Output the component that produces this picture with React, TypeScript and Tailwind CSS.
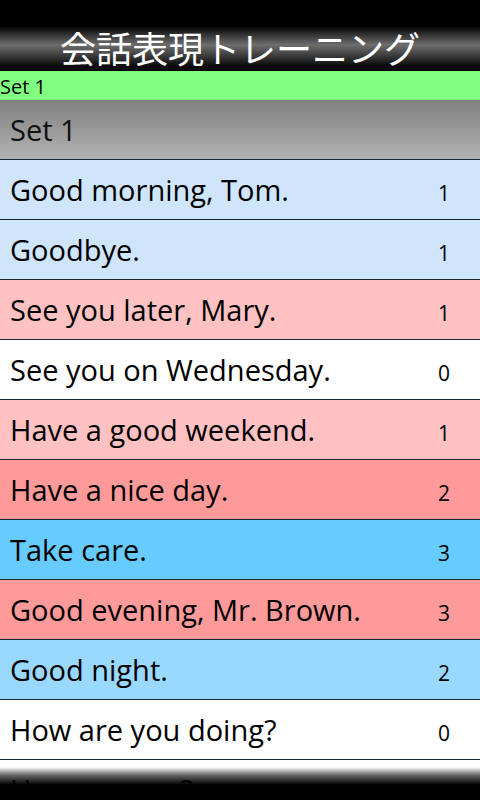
import React from "react";

type Phrase = {
  text: string;
  count: number;
  bg: string;
};

const PHRASES: Phrase[] = [
  { text: "Good morning, Tom.", count: 1, bg: "bg-[#cfe5fc]" },
  { text: "Goodbye.", count: 1, bg: "bg-[#cfe5fc]" },
  { text: "See you later, Mary.", count: 1, bg: "bg-[#ffc1c1]" },
  { text: "See you on Wednesday.", count: 0, bg: "bg-white" },
  { text: "Have a good weekend.", count: 1, bg: "bg-[#ffc1c1]" },
  { text: "Have a nice day.", count: 2, bg: "bg-[#ff9a9a]" },
  { text: "Take care.", count: 3, bg: "bg-[#66ccff]" },
  { text: "Good evening, Mr. Brown.", count: 3, bg: "bg-[#ff9a9a]" },
  { text: "Good night.", count: 2, bg: "bg-[#99d9ff]" },
  { text: "How are you doing?", count: 0, bg: "bg-white" },
  { text: "How are you?", count: 0, bg: "bg-white" },
];

const PhraseRow = ({ phrase }: { phrase: Phrase }) => (
  <div
    className={`flex h-[60px] shrink-0 items-center border-b border-[#1c2630] ${phrase.bg}`}
  >
    <span className="flex-1 pl-[10px] text-[29px] leading-none text-black">
      {phrase.text}
    </span>
    <span className="w-[40px] pr-[30px] pt-[8px] text-right text-[21px] leading-none text-black box-content">
      {phrase.count}
    </span>
  </div>
);

export default function App() {
  return (
    <div
      className="relative flex h-[800px] w-[480px] flex-col overflow-hidden bg-black"
      style={{ fontFamily: '"Open Sans", "Noto Sans", sans-serif' }}
    >
      {/* title bar */}
      <div className="flex h-[71px] shrink-0 items-start justify-center bg-[linear-gradient(to_bottom,#000_0px,#000_26px,#3a3a3a_36px,#6e6e6e_45px,#3a3a3a_56px,#0a0a0a_66px,#000_71px)] pt-[26px]">
        <span
          className="text-[36px] leading-[42px] text-white"
          style={{ fontFamily: '"Noto Sans CJK JP", "Open Sans", sans-serif' }}
        >
          会話表現トレーニング
        </span>
      </div>

      {/* current set */}
      <div className="flex h-[29px] shrink-0 items-center bg-[#80ff80] pt-[2px] text-[20px] leading-none text-black">
        Set 1
      </div>

      {/* list */}
      <div className="flex flex-1 flex-col overflow-hidden">
        <div className="flex h-[60px] shrink-0 items-center border-b border-[#1c2630] bg-[linear-gradient(to_bottom,#808080,#b2b2b2)] pl-[10px] text-[29px] leading-none text-[#111]">
          Set 1
        </div>
        {PHRASES.map((p) => (
          <PhraseRow key={p.text} phrase={p} />
        ))}
      </div>

      {/* bottom fade */}
      <div className="pointer-events-none absolute bottom-0 left-0 h-[33px] w-full bg-[linear-gradient(to_bottom,rgba(0,0,0,0)_0px,rgba(0,0,0,0.6)_8px,#000_18px,#000_33px)]" />
    </div>
  );
}
